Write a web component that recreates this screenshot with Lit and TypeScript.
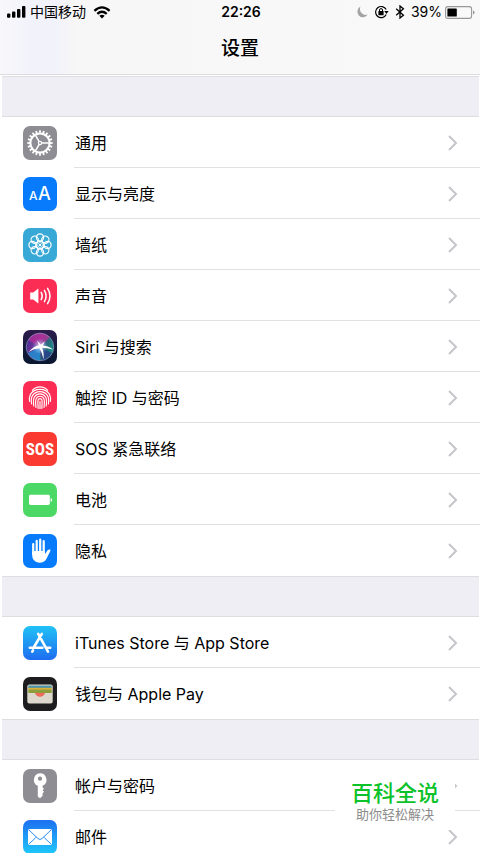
import { LitElement, html, svg, css } from "lit";
import { customElement, property } from "lit/decorators.js";

const angles = (n: number) => Array.from({ length: n }, (_, i) => (i * 360) / n);

const glyphs: Record<string, unknown> = {
  general: svg`
    <rect width="34" height="34" rx="7" fill="#8e8d93"/>
    <g fill="none" stroke="#fff">
      <circle cx="17" cy="17" r="9.6" stroke-width="2"/>
      ${angles(20).map((a) => svg`<path d="M17 7.4V4.3" stroke-width="1.8" transform="rotate(${a} 17 17)"/>`)}
      ${angles(3).map((a) => svg`<path d="M17 17H27" stroke-width="1.5" transform="rotate(${a} 17 17)"/>`)}
    </g>
    <circle cx="17" cy="17" r="2.2" fill="#fff"/>
    <circle cx="17" cy="17" r="1" fill="#8e8d93"/>`,
  display: svg`
    <rect width="34" height="34" rx="7" fill="#077bfb"/>
    <text x="6" y="23" class="aa" font-size="12">A</text>
    <text x="15" y="23" class="aa" font-size="18">A</text>`,
  wallpaper: svg`
    <rect width="34" height="34" rx="7" fill="#38a8d6"/>
    <g fill="none" stroke="#fff" stroke-width="1.2">
      ${angles(8).map((a) => svg`<circle cx="17" cy="9.5" r="3.6" transform="rotate(${a} 17 17)"/>`)}
      <circle cx="17" cy="17" r="4"/>
      ${angles(8).map((a) => svg`<path d="M17 15V13" transform="rotate(${a} 17 17)"/>`)}
    </g>
    <circle cx="17" cy="17" r="1.2" fill="#fff"/>`,
  sound: svg`
    <rect width="34" height="34" rx="7" fill="#fb2d55"/>
    <path d="M7.2 13.6H10.2L15.4 9.6V24.4L10.2 20.4H7.2Z" fill="#fff"/>
    <g fill="none" stroke="#fff" stroke-width="1.5" stroke-linecap="round">
      <path d="M18.2 13.4Q20.2 17 18.2 20.6M21.4 11.4Q24.8 17 21.4 22.6M24.6 9.4Q29.4 17 24.6 24.6"/>
    </g>`,
  siri: svg`
    <defs>
      <linearGradient id="night" x2="0" y2="1"><stop stop-color="#2d1c4c"/><stop offset=".5" stop-color="#151a3c"/><stop offset="1" stop-color="#0a1830"/></linearGradient>
      <linearGradient id="orb" x1="0" y1=".3" x2="1" y2=".7"><stop stop-color="#4a2c96"/><stop offset=".45" stop-color="#7c3c98"/><stop offset=".7" stop-color="#286c7c"/><stop offset="1" stop-color="#1b9488"/></linearGradient>
      <radialGradient id="glow"><stop stop-color="#fff"/><stop offset=".3" stop-color="#d8eaff" stop-opacity=".6"/><stop offset="1" stop-color="#7ac8f0" stop-opacity="0"/></radialGradient>
    </defs>
    <rect width="34" height="34" rx="7" fill="url(#night)"/>
    <circle cx="17" cy="17" r="13.6" fill="url(#orb)"/>
    <path d="M17 17 5 10A14 14 0 0 1 27 7Z" fill="#c92c98" opacity=".6"/>
    <path d="M17 17 5 23A14 14 0 0 0 17 30.6Z" fill="#1496d8" opacity=".75"/>
    <path d="M17 17 19 30.5A14 14 0 0 0 29 23Z" fill="#283a86" opacity=".8"/>
    <circle cx="17" cy="16.5" r="8" fill="url(#glow)"/>
    <path d="M5.4 22Q11 16 16 15.2L14 10.4 18 14.8 21.8 11.2 20 15.4Q26 16 30 19.6Q24 17.8 19 17.8Q21.5 23 20.4 29.6Q19 22 16.4 18.2Q10 18.8 5.4 22Z" fill="#fff"/>
    <circle cx="17" cy="17" r="13.8" fill="none" stroke="#9cacd8" stroke-opacity=".65" stroke-width=".9"/>`,
  touch: svg`
    <rect width="34" height="34" rx="7" fill="#fb2d55"/>
    <g fill="none" stroke="#fff" stroke-width="1.15" stroke-linecap="round">
      <path d="M9.3 9.4Q12.6 5.9 17 5.9T24.7 9.4"/>
      <path d="M6.6 20.4Q5.8 16.6 7.4 13.4Q10.4 8.3 17 8.3T26.6 13.4Q28.1 16.6 27.4 20.4"/>
      <path d="M8.6 23Q7.6 17.5 9.6 14.4Q12.2 10.6 17 10.6T24.4 14.4Q26.3 17.5 25.4 23"/>
      <path d="M10.8 25Q9.9 18.6 11.4 16Q13.4 12.9 17 12.9T22.6 16Q24.1 18.6 23.2 25"/>
      <path d="M13 26.4Q12.2 19.6 13.2 17.4Q14.6 15.2 17 15.2T20.8 17.4Q21.8 19.6 21 26.4"/>
      <path d="M15.2 27.4Q14.6 20 15.2 18.6Q17 16.6 18.8 18.6Q19.4 20 18.8 27.4M17 20.4V27.6"/>
    </g>`,
  sos: svg`
    <rect width="34" height="34" rx="7" fill="#fb3b31"/>
    <text x="17" y="23" class="sos" font-size="17" text-anchor="middle">SOS</text>`,
  battery: svg`
    <rect width="34" height="34" rx="7" fill="#4cd864"/>
    <rect x="6" y="11.8" width="20.8" height="10.2" rx="1.4" fill="#fff"/>
    <path d="M27.6 15Q29.2 15.4 29.2 17T27.6 19Z" fill="#fff"/>`,
  privacy: svg`
    <rect width="34" height="34" rx="7" fill="#077bfb"/>
    <path d="M10.2 10V20M13.7 6.9V19M17.2 5.7V19M20.7 7.2V19" stroke="#fff" stroke-width="2.2" stroke-linecap="round"/>
    <path d="M9.1 17H21.8V20.2Q23.2 18.6 24.2 16.8Q25.6 14.9 27.2 15.6Q27.9 16 27.2 17.2L23.6 24.4Q21.4 28.8 16.4 28.8Q9.1 28.4 9.1 20.6Z" fill="#fff"/>`,
  store: svg`
    <defs><linearGradient id="sky" x2="0" y2="1"><stop stop-color="#20c2f6"/><stop offset="1" stop-color="#1d6df0"/></linearGradient></defs>
    <rect width="34" height="34" rx="7" fill="url(#sky)"/>
    <g fill="none" stroke="#fff" stroke-width="2.6" stroke-linecap="round">
      <path d="M18.8 7.8 11 21M15.2 7.8 25 25.6M6.8 21.8H19.4M24 21.8H27.2M9.3 25.6 10 24.4"/>
    </g>`,
  wallet: svg`
    <rect width="34" height="34" rx="7" fill="#1d1c1e"/>
    <rect x="4.3" y="7.6" width="25.4" height="19" rx="2" fill="#ddd8ce"/>
    <path d="M5.3 8.6H28.7V11H5.3Z" fill="#4a93a8"/>
    <path d="M5.3 10.8H28.7V13.2H5.3Z" fill="#d9b03c"/>
    <path d="M5.3 12.6H28.7V16H5.3Z" fill="#8f9c3c"/>
    <path d="M12 16H22Q20.6 19.8 17 19.8T12 16Z" fill="#ee6b5c"/>`,
  key: svg`
    <rect width="34" height="34" rx="7" fill="#8e8d93"/>
    <path fill-rule="evenodd" d="M17 4.2A6.6 6.6 0 0 1 19.6 16.8V18.4L21 19.8 19.6 21.2 21 22.8 19.6 24.2V26.8L17.4 29H16.6L14.8 27.4V16.8A6.6 6.6 0 0 1 17 4.2ZM17 7.6A2.1 2.1 0 1 0 17 11.8A2.1 2.1 0 1 0 17 7.6Z" fill="#fff"/>`,
  mail: svg`
    <defs><linearGradient id="post" x2="0" y2="1"><stop stop-color="#1d70f1"/><stop offset="1" stop-color="#1ec8fb"/></linearGradient></defs>
    <rect width="34" height="34" rx="7" fill="url(#post)"/>
    <rect x="5" y="9" width="24" height="16" rx="1.8" fill="#fff"/>
    <path d="M5.8 9.8 15 18.6Q17 20.4 19 18.6L28.2 9.8M5.8 24.2 13.4 17M28.2 24.2 20.6 17" fill="none" stroke="#2b93f0" stroke-width="1"/>`,
};

@customElement("setting-row")
class SettingRow extends LitElement {
  @property() icon = "";
  @property() label = "";

  static styles = css`
    :host { display: block; }
    .row {
      display: flex;
      align-items: stretch;
      padding-left: 23px;
      gap: 17px;
      height: 51px;
      color: #000;
      text-decoration: none;
    }
    .tile { width: 34px; height: 34px; flex: none; align-self: center; }
    .body {
      flex: 1;
      display: flex;
      align-items: center;
      justify-content: space-between;
      padding: 1px 22px 0 1px;
      border-bottom: 1px solid #e1e1e4;
    }
    :host(:last-child) .body { border-bottom-color: transparent; }
    .label { font-size: 16px; line-height: 24px; }
    .chevron { width: 11px; height: 16px; }
    .aa { font-family: Inter, sans-serif; font-weight: 500; fill: #fff; }
    .sos { font-family: "Liberation Sans Narrow", "Roboto Condensed", sans-serif; font-weight: 700; fill: #fff; }
  `;

  render() {
    return html`<a class="row" href="#${this.icon}">
      <svg class="tile" viewBox="0 0 34 34" aria-hidden="true">${glyphs[this.icon]}</svg>
      <span class="body">
        <span class="label">${this.label}</span>
        <svg class="chevron" viewBox="0 0 11 16" aria-hidden="true">
          <path d="M2 1 9 8 2 15" fill="none" stroke="#c5c5ca" stroke-width="2"/>
        </svg>
      </span>
    </a>`;
  }
}

const groups: [string, string][][] = [
  [
    ["general", "通用"],
    ["display", "显示与亮度"],
    ["wallpaper", "墙纸"],
    ["sound", "声音"],
    ["siri", "Siri 与搜索"],
    ["touch", "触控 ID 与密码"],
    ["sos", "SOS 紧急联络"],
    ["battery", "电池"],
    ["privacy", "隐私"],
  ],
  [
    ["store", "iTunes Store 与 App Store"],
    ["wallet", "钱包与 Apple Pay"],
  ],
  [
    ["key", "帐户与密码"],
    ["mail", "邮件"],
  ],
];

@customElement("app-root")
class AppRoot extends LitElement {
  static styles = css`
    :host {
      display: block;
      height: 100vh;
      overflow: hidden;
      background: #fff;
      color: #000;
      font-family: Inter, "Noto Sans CJK SC", sans-serif;
    }
    .top {
      background: linear-gradient(90deg, #f8f8fb, #f2f2fb 30px, #f2f2fa 56px, #f7f7f7 76px, #f9f9f9);
      border-bottom: 1px solid #dcdce0;
    }
    .status {
      display: grid;
      grid-template-columns: 1fr auto 1fr;
      align-items: center;
      height: 24px;
      padding: 0 5px 0 7px;
      font-size: 14px;
      line-height: 24px;
    }
    .side { display: flex; align-items: center; gap: 4px; }
    .end { justify-content: flex-end; gap: 6px; }
    .charge { display: flex; align-items: center; gap: 3px; }
    .time { font-weight: 600; }
    .wifi { margin-left: 3px; }
    .title {
      margin: 0;
      height: 50px;
      font-size: 19px;
      line-height: 50px;
      font-weight: 500;
      text-align: center;
    }
    .group {
      margin: 0;
      padding: 0;
    }
    .gap {
      height: 39px;
      margin: 0 1px 0 2px;
      background: #efeef4;
      border: solid #dddde2;
      border-width: 1px 0;
    }
    .first { margin-top: 1px; }
    .mark {
      position: fixed;
      right: 25px;
      bottom: 23px;
      width: 120px;
      padding: 4px 0 8px;
      background: #fff;
      text-align: center;
    }
    .brand { margin: 0; color: #0cc22b; font-size: 22px; line-height: 26px; font-weight: 500; }
    .motto { margin: 0; color: #8c8c8c; font-size: 13px; line-height: 16px; }
  `;

  render() {
    return html`
      <header class="top">
        <div class="status">
          <div class="side">
            <svg width="19" height="12" viewBox="0 0 19 12" aria-hidden="true">
              <rect x="0" y="7.6" width="3.4" height="4.2" rx="1"/><rect x="5" y="5.4" width="3.4" height="6.4" rx="1"/>
              <rect x="10" y="3" width="3.4" height="8.8" rx="1"/><rect x="15" y="0" width="3.4" height="11.8" rx="1"/>
            </svg>
            <span>中国移动</span>
            <svg class="wifi" width="18" height="13" viewBox="0 0 18 13" aria-hidden="true">
              <g fill="none" stroke="#000" stroke-width="2.3"><path d="M1.4 4.8Q9-2 16.6 4.8M4.3 7.9Q9 3.7 13.7 7.9"/></g>
              <path d="M6.3 9.8Q9 7.6 11.7 9.8L9 12.6Z"/>
            </svg>
          </div>
          <time class="time">22:26</time>
          <div class="side end">
            <svg width="11" height="12" viewBox="0 0 11 12" aria-hidden="true">
              <path d="M3.6.6A5.6 5.6 0 1 0 10.8 8.6A5.8 5.8 0 0 1 3.6.6Z" fill="#a3a3a6"/>
            </svg>
            <svg width="15" height="14" viewBox="0 0 15 14" aria-hidden="true">
              <path d="M12.2 4.6A5.6 5.6 0 1 0 12.2 9.6" fill="none" stroke="#000" stroke-width="1.2"/>
              <path d="M10.2 6H14.6L12.4 9Z"/><rect x="4.4" y="6" width="5.2" height="4.2" rx=".5"/>
              <path d="M5.5 6.4V5Q5.5 3.6 7 3.6T8.5 5V6.4" fill="none" stroke="#000"/>
            </svg>
            <svg width="10" height="14" viewBox="0 0 10 14" aria-hidden="true">
              <path d="M1.2 3.8 8.4 10.2 5 13V1L8.4 3.8 1.2 10.2" fill="none" stroke="#000" stroke-width="1.3"/>
            </svg>
            <span class="charge">
              39%
              <svg width="30" height="13" viewBox="0 0 30 13" aria-hidden="true">
                <rect x=".6" y=".6" width="26" height="11.8" rx="2.4" fill="none" stroke="#98989b" stroke-width="1.1"/>
                <rect x="2.4" y="2.4" width="9.4" height="8.2" rx=".6"/><path d="M28 4.4Q29.6 5 29.6 6.5T28 8.6Z" fill="#98989b"/>
              </svg>
            </span>
          </div>
        </div>
        <h1 class="title">设置</h1>
      </header>
      <main>
        ${groups.map(
          (rows, i) => html`
            <div class="gap ${i === 0 ? "first" : ""}"></div>
            <nav class="group">
              ${rows.map(([icon, label]) => html`<setting-row icon=${icon} label=${label}></setting-row>`)}
            </nav>`
        )}
      </main>
      <aside class="mark">
        <p class="brand">百科全说</p>
        <p class="motto">助你轻松解决</p>
      </aside>
    `;
  }
}
